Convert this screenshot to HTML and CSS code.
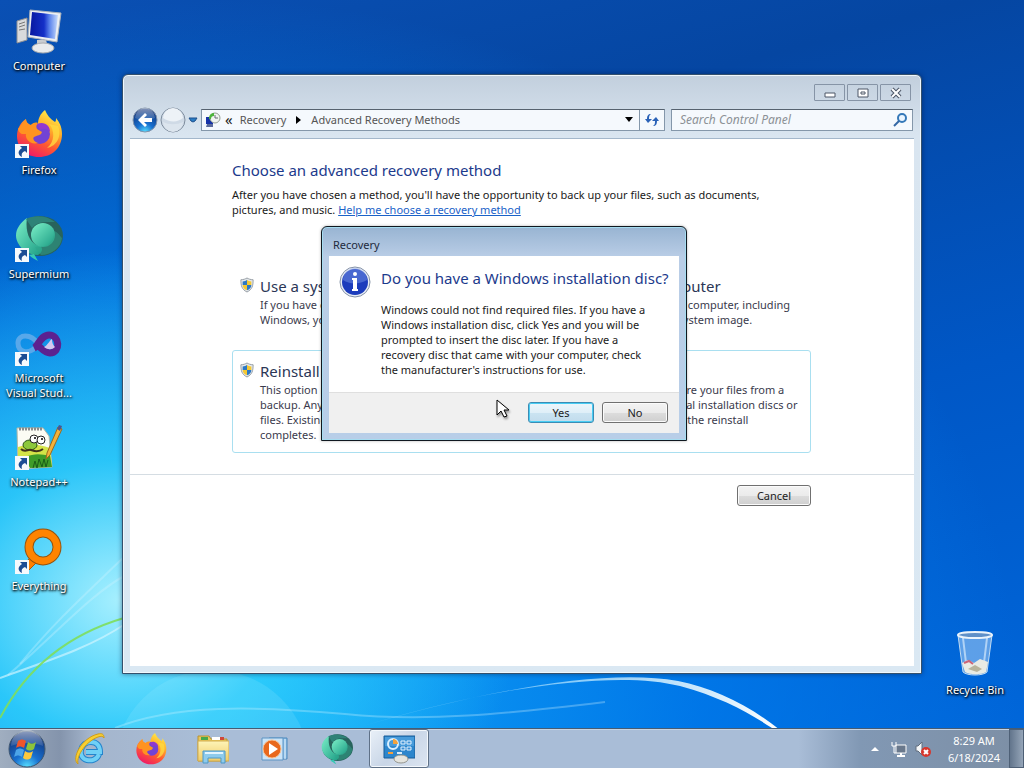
FILE: index.html
```
<!DOCTYPE html>
<html lang="en">
<head>
    <meta charset="UTF-8">
    <meta name="viewport" content="width=device-width, initial-scale=1.0">
    <title>Advanced Recovery Methods</title>
    <link rel="stylesheet" href="styles.css">
</head>
<body>
    <!-- shared icons -->
    <svg class="defs" aria-hidden="true">
        <defs>
            <linearGradient id="foxBody" x1="0.8" y1="0" x2="0.3" y2="1">
                <stop offset="0" stop-color="#fff44f"/>
                <stop offset="0.35" stop-color="#ffb02a"/>
                <stop offset="0.65" stop-color="#ff5a30"/>
                <stop offset="1" stop-color="#ee1868"/>
            </linearGradient>
            <linearGradient id="smBall" x1="0" y1="0" x2="1" y2="1">
                <stop offset="0" stop-color="#7cf0c8"/>
                <stop offset="1" stop-color="#1c9c84"/>
            </linearGradient>
            <linearGradient id="screen" x1="0" y1="0" x2="1" y2="0">
                <stop offset="0" stop-color="#0818a0"/>
                <stop offset="0.5" stop-color="#1430c8"/>
                <stop offset="0.7" stop-color="#5c84ec"/>
                <stop offset="1" stop-color="#c8dcfc"/>
            </linearGradient>
            <radialGradient id="blueBall" cx="0.5" cy="1" r="0.9">
                <stop offset="0" stop-color="#58e0ff"/>
                <stop offset="0.4" stop-color="#1870d0"/>
                <stop offset="1" stop-color="#12357c"/>
            </radialGradient>
            <linearGradient id="gloss" x1="0" y1="0" x2="0" y2="1">
                <stop offset="0" stop-color="#fff" stop-opacity="0.8"/>
                <stop offset="1" stop-color="#fff" stop-opacity="0.15"/>
            </linearGradient>
            <linearGradient id="folder" x1="0" y1="0" x2="0" y2="1">
                <stop offset="0" stop-color="#fdf4b8"/>
                <stop offset="1" stop-color="#f0cc68"/>
            </linearGradient>
        </defs>
        <symbol id="firefox" viewBox="0 0 48 48">
            <path d="M30 0c-5 4-7 9-7 14-3-1-5-1-7 1-3-1-5-3-5-6-6 4-9 10-9 17 0 12 9 21 22 21s23-9 23-23c0-8-3-12-6-16 0 2 0 3-1 4-5-3-8-7-10-12z" fill="url(#foxBody)"/>
            <circle cx="25" cy="24" r="10" fill="#7242d4"/>
            <path d="M22 14c7-3 13 1 13 8-3-4-7-4-10-2z" fill="#9038d0"/>
            <path d="M3 19c2-3 5-5 8-10 0 4 2 6 5 6 2-2 4-3 7-2-2 2-2 4-1 6l5 3c-1 4-5 3-8 5-2 2 1 5 4 6-8 2-13-4-12-9-3 0-6 1-8-5z" fill="#ff9320"/>
            <path d="M34 14c6 6 6 18-2 24 10-2 15-12 11-22z" fill="#ffda40" opacity="0.8"/>
        </symbol>
        <symbol id="supermium" viewBox="0 0 48 48">
            <ellipse cx="25" cy="22" rx="23" ry="20" fill="#28635c"/>
            <path d="M12 4C3 10-2 20 3 29c4 8 12 12 20 12 4-3 5-5 3-9C14 31 10 17 12 4z" fill="url(#smBall)"/>
            <path d="M11 5c8-4 20-4 29 3-10 0-17-1-23 6z" fill="#2e8277"/>
            <circle cx="28" cy="21" r="12" fill="url(#smBall)"/>
            <path d="M39 17c4 1 6 5 8 7-1 10-11 17-21 17l-6-8c10 2 20-4 19-16z" fill="#32a389" opacity="0.5"/>
            <path d="M14 41c3 3 6 4 9 6l-4-7z" fill="#36c9b4"/>
        </symbol>
        <symbol id="shield" viewBox="0 0 16 18">
            <path d="M8 1c2 1 4 2 7 2 0 7-1 11-7 14C2 14 1 10 1 3c3 0 5-1 7-2z" fill="#e4e8ec" stroke="#8b939b"/>
            <path d="M8 3v6H3V5c2 0 4-1 5-2z" fill="#2c78c4"/>
            <path d="M8 3v6h5V5c-2 0-4-1-5-2z" fill="#f5c832"/>
            <path d="M3 9h5v6C5 14 3 12 3 9z" fill="#f5c832"/>
            <path d="M13 9H8v6c3-1 5-3 5-6z" fill="#2c78c4"/>
        </symbol>
        <symbol id="shortcut" viewBox="0 0 14 14">
            <path d="M0 0h14v14H0z" fill="#f6f9fc"/>
            <path d="M5 2h7v7l-2-2c-3 1-4 3-3 6-4-2-5-6 0-9z" fill="#1c4d94"/>
        </symbol>
    </svg>

    <div class="desktop">
        <svg class="wallpaper" viewBox="0 0 1024 768" preserveAspectRatio="none" aria-hidden="true">
            <defs>
                <linearGradient id="streak" x1="0" y1="0" x2="1" y2="0">
                    <stop offset="0" stop-color="#bfeaff" stop-opacity="0.1"/>
                    <stop offset="0.5" stop-color="#bfeaff" stop-opacity="0.7"/>
                    <stop offset="1" stop-color="#fff"/>
                </linearGradient>
            </defs>
            <circle cx="212" cy="768" r="98" fill="#b4f4ff" opacity="0.15"/>
            <path d="M0 678c44-16 90-30 125-54" class="ray"/>
            <path d="M8 675C50 640 90 594 126 575" class="ray thin"/>
            <path d="M20 664C56 620 90 590 126 555" class="ray thin"/>
            <path d="M0 718c26-49 66-83 124-100" class="ray green"/>
            <path d="M115 728c60-24 140-22 230-14 80 8 160 0 260-12" class="ray thin"/>
            <path d="M350 730c120-38 260-62 330-44 40 11 66 25 92 42l8 2c-30-24-66-42-102-49-80-14-210 14-328 49z" fill="url(#streak)"/>
        </svg>

        <nav class="icons" aria-label="Desktop">
            <a class="icon" href="#computer">
                <svg viewBox="0 0 48 48">
                    <path d="M2 15l10-3v22L2 37z" fill="#d9dadc" stroke="#8e9094"/>
                    <path d="M4 18l6-2M4 21l6-2M4 24l6-1" stroke="#777"/>
                    <path d="M22 34h9l2 7H22z" fill="#c9ccd0"/>
                    <ellipse cx="28" cy="42" rx="11" ry="5" fill="#e9ebed" stroke="#a9abae"/>
                    <path d="M15 4l31 3-4 29-29-5z" fill="#eceff2" stroke="#a9b1bc"/>
                    <path d="M17 6l26 3-3 24-25-4z" fill="url(#screen)"/>
                </svg>
                <span>Computer</span>
            </a>
            <a class="icon" href="#firefox-app">
                <svg viewBox="0 0 48 48"><use href="#firefox"/><use href="#shortcut" x="0" y="34" width="14" height="14"/></svg>
                <span>Firefox</span>
            </a>
            <a class="icon" href="#supermium-app">
                <svg viewBox="0 0 48 48"><use href="#supermium"/><use href="#shortcut" x="0" y="34" width="14" height="14"/></svg>
                <span>Supermium</span>
            </a>
            <a class="icon" href="#visual-studio">
                <svg viewBox="0 0 48 48">
                    <path d="M23 26C16 15 3 16 3 25s10 12 18 4" fill="none" stroke="#58a8ea" stroke-width="5"/>
                    <path d="M19 30c4-2 7-13 15-13 11 0 12 18 1 18-6 0-9-6-13-8" fill="none" stroke="#5c2290" stroke-width="7"/>
                    <path d="M29 29c4-2 5-6 8-8 0 4 1 6 3 8-3 3-7 3-11 0z" fill="#d6c6ef"/>
                    <use href="#shortcut" x="0" y="34" width="14" height="14"/>
                </svg>
                <span>Microsoft<br>Visual Stud...</span>
            </a>
            <a class="icon" href="#notepad">
                <svg viewBox="0 0 48 48">
                    <path d="M2 6h26l6 8 3 31-34 2z" fill="#fbfcf4" stroke="#b4b8a8"/>
                    <path d="M3 25c12-4 20-3 32 1l2 18-34 2z" fill="#d4e448"/>
                    <path d="M10 35c10-4 16-3 25-1l2 11-22 1z" fill="#3f9c28"/>
                    <path d="M18 46l2-7 2 7 2-9 3 8 2-8 2 8 2-7" fill="none" stroke="#1b5c18"/>
                    <path d="M4 7h24" stroke="#8c8c8c" stroke-width="3" stroke-dasharray="2 1"/>
                    <ellipse cx="15" cy="23" rx="7" ry="5" fill="#8cc83c" stroke="#2a5418"/>
                    <path d="M6 27c4 4 7 0 10 1s7 3 12-1" fill="none" stroke="#41321c" stroke-width="2"/>
                    <circle cx="19" cy="17" r="4" fill="#fff" stroke="#222"/>
                    <circle cx="26" cy="18" r="4" fill="#fff" stroke="#222"/>
                    <circle cx="20" cy="16" r="1"/><circle cx="27" cy="17" r="1"/>
                    <path d="M31 37l1-6L43 5l4 2-12 26z" fill="#f3b23a" stroke="#9a6a1c"/>
                    <path d="M42 7l2-4 3 1-2 5z" fill="#4a5590"/>
                    <use href="#shortcut" x="0" y="34" width="14" height="14"/>
                </svg>
                <span>Notepad++</span>
            </a>
            <a class="icon" href="#everything">
                <svg viewBox="0 0 48 48">
                    <path d="M17 29l6 6-9 9-5-5z" fill="#ff8000" stroke="#a85808"/>
                    <circle cx="28" cy="21" r="14" fill="none" stroke="#945410" stroke-width="9"/>
                    <circle cx="28" cy="21" r="14" fill="none" stroke="#ff8400" stroke-width="7"/>
                    <use href="#shortcut" x="0" y="34" width="14" height="14"/>
                </svg>
                <span>Everything</span>
            </a>
        </nav>

        <a class="icon recycle" href="#recycle-bin">
            <svg viewBox="0 0 48 48">
                <path d="M7 5h34l-5 37c-4 4-20 4-24 0z" fill="#a9d0f5" fill-opacity="0.55" stroke="#c3dcf2"/>
                <path d="M12 8l4 33M36 8l-4 33" stroke="#e8f5ff" stroke-width="2" opacity="0.6"/>
                <path d="M11 33l6-3 6 3 6-4 8 3-2 10c-5 3-16 3-21 0z" fill="#e9ebe4"/>
                <path d="M13 33l5-2 4 3" fill="none" stroke="#cc6478" stroke-width="2"/>
                <path d="M17 39l7-4 7 4-5 3" fill="#b8b49c"/>
                <ellipse cx="24" cy="5" rx="17" ry="3" fill="#5f90c8" stroke="#eaf3fb" stroke-width="2"/>
            </svg>
            <span>Recycle Bin</span>
        </a>

        <main class="window">
            <header class="titlebar">
                <button class="caption" aria-label="Minimize"><svg viewBox="0 0 14 12"><path d="M2 6h10v4H2z" fill="#fff" stroke="#4c5666"/></svg></button>
                <button class="caption" aria-label="Maximize"><svg viewBox="0 0 14 12"><path d="M2 2h10v8H2z" fill="#fff" stroke="#4c5666"/><path d="M5 5h4v2H5z" fill="#fff" stroke="#4c5666"/></svg></button>
                <button class="caption" aria-label="Close"><svg viewBox="0 0 14 12"><path d="M3 2l8 8M11 2l-8 8" stroke="#4c5666" stroke-width="4"/><path d="M3 2l8 8M11 2l-8 8" stroke="#fff" stroke-width="2"/></svg></button>
            </header>

            <div class="toolbar">
                <button class="nav-btn" aria-label="Back">
                    <svg viewBox="0 0 26 26">
                        <circle cx="13" cy="13" r="12" fill="url(#blueBall)" stroke="#8294ac"/>
                        <path d="M3 11a10 10 0 0 1 20 0c-6 3-14 3-20 0z" fill="url(#gloss)" opacity="0.6"/>
                        <path d="M6 13l7-7 2 2-3 3h8v4h-8l3 3-2 2z" fill="#fff"/>
                    </svg>
                </button>
                <button class="nav-btn" aria-label="Forward">
                    <svg viewBox="0 0 26 26">
                        <circle cx="13" cy="13" r="12" fill="#cfdae6" stroke="#7f8d9e"/>
                        <path d="M3 11a10 10 0 0 1 20 0c-6 5-14 4-20 0z" fill="#edf2f7"/>
                        <path d="M3 15c6 3 14 3 20 0a10 10 0 0 1-20 0z" fill="#dce5ee"/>
                    </svg>
                </button>
                <button class="recent" aria-label="Recent pages"><svg viewBox="0 0 10 6"><path d="M1 1h8L7 4 5 5 3 4z" fill="#2a7cc4" stroke="#1d4f8c"/></svg></button>
                <div class="address">
                    <svg class="address-icon" viewBox="0 0 16 16">
                        <path d="M1 5h7v7H1z" fill="#1733a8"/><path d="M2 12h6v3H1z" fill="#5a6a9c"/>
                        <circle cx="10" cy="6" r="5" fill="#f0f4f0" stroke="#96a096"/>
                        <path d="M10 3v3h3" fill="none" stroke="#667"/>
                        <path d="M4 7c0-4 2-6 5-6v3c-2 0-3 1-3 3z" fill="#4cb43c"/>
                    </svg>
                    <span class="chevrons">«</span>
                    <a href="#recovery">Recovery</a>
                    <svg class="crumb-arrow" viewBox="0 0 5 8"><path d="M0 0l5 4-5 4z" fill="#000"/></svg>
                    <a href="#methods">Advanced Recovery Methods</a>
                    <button class="drop" aria-label="Previous locations"><svg viewBox="0 0 8 5"><path d="M0 0h8L4 5z" fill="#000"/></svg></button>
                    <button class="refresh" aria-label="Refresh">
                        <svg viewBox="0 0 16 16"><path d="M7 2c-3 0-4 2-4 5H1l3 4 4-4H5c0-2 0-4 2-5z" fill="#2a62b8"/><path d="M9 14c3 0 4-2 4-5h2l-3-4-4 4h3c0 2 0 4-2 5z" fill="#2a62b8"/></svg>
                    </button>
                </div>
                <div class="search">
                    <input type="text" placeholder="Search Control Panel" aria-label="Search Control Panel">
                    <svg viewBox="0 0 14 14"><circle cx="9" cy="5" r="4" fill="#eaf5ff" stroke="#3478b8" stroke-width="2"/><path d="M6 8l-5 5" stroke="#3468a4" stroke-width="2"/></svg>
                </div>
            </div>

            <div class="content">
                <section class="page">
                    <h1>Choose an advanced recovery method</h1>
                    <p class="intro">After you have chosen a method, you'll have the opportunity to back up your files, such as documents,<br>pictures, and music. <a href="#help">Help me choose a recovery method</a></p>

                    <button class="option">
                        <svg class="shield"><use href="#shield"/></svg>
                        <span class="option-text">
                            <span class="option-title">Use a system image you created earlier to recover your computer</span>
                            <span>If you have created the system image, you can use it to replace everything on your computer, including<br>Windows, your programs, and all of your files, with the information saved on the system image.</span>
                        </span>
                    </button>
                    <button class="option selected">
                        <svg class="shield"><use href="#shield"/></svg>
                        <span class="option-text">
                            <span class="option-title">Reinstall Windows (requires disc)</span>
                            <span>This option reinstalls Windows on your computer. Afterwards, you can always restore your files from a<br>backup. Any programs you installed will need to be reinstalled by using your original installation discs or<br>files. Existing files might be moved to a Windows.old folder on your hard disk after the reinstall<br>completes.</span>
                        </span>
                    </button>
                </section>
                <footer class="page-footer">
                    <button class="btn">Cancel</button>
                </footer>
            </div>
        </main>

        <div class="dialog" role="dialog" aria-labelledby="dialog-title">
            <div class="dialog-caption">Recovery</div>
            <div class="dialog-body">
                <svg class="info" viewBox="0 0 32 32">
                    <circle cx="16" cy="16" r="15" fill="#e8edf5" stroke="#8592a8"/>
                    <circle cx="16" cy="16" r="13" fill="#1c3cbc"/>
                    <path d="M4 14a12 12 0 0 1 24 0c-7 4-17 5-24 0z" fill="#7f9ce8" opacity="0.45"/>
                    <circle cx="16" cy="8" r="2" fill="#fff"/>
                    <path d="M13 12h5v11h1v2h-6v-2h1v-9h-1z" fill="#fff"/>
                </svg>
                <div>
                    <h2 id="dialog-title">Do you have a Windows installation disc?</h2>
                    <p>Windows could not find required files. If you have a<br>Windows installation disc, click Yes and you will be<br>prompted to insert the disc later. If you have a<br>recovery disc that came with your computer, check<br>the manufacturer's instructions for use.</p>
                </div>
            </div>
            <div class="dialog-footer">
                <button class="btn default">Yes</button>
                <button class="btn">No</button>
            </div>
        </div>

        <svg class="cursor" viewBox="0 0 14 20" aria-hidden="true"><path d="M1 1v15l4-4 3 6 3-1-3-6h5z" fill="#fff" stroke="#000"/></svg>
    </div>

    <footer class="taskbar">
        <button class="start" aria-label="Start">
            <svg viewBox="0 0 38 38">
                <circle cx="19" cy="19" r="18" fill="url(#blueBall)" stroke="#3f566e"/>
                <path d="M3 16a16 16 0 0 1 32 0c-9-4-22-4-32 0z" fill="url(#gloss)" opacity="0.7"/>
                <path d="M10 11c3-2 5-2 8 0l-2 7c-3-2-5-2-8 0z" fill="#f0552a"/>
                <path d="M20 12c3 2 5 2 8 0l-2 7c-3 2-5 2-8 0z" fill="#8cc43c"/>
                <path d="M8 20c3-2 5-2 8 0l-2 7c-3-2-5-2-8 0z" fill="#4ca4e8"/>
                <path d="M17 21c3 2 5 2 8 0l-2 7c-3 2-5 2-8 0z" fill="#fcc83c"/>
            </svg>
        </button>
        <button class="task" aria-label="Internet Explorer">
            <svg viewBox="0 0 32 32">
                <path d="M26 21c-2 6-8 7-12 6-5-1-7-6-6-10 1-5 5-8 10-8 6 0 9 4 9 10H13" fill="none" stroke="#2484cc" stroke-width="6"/>
                <path d="M26 21c-2 6-8 7-12 6-5-1-7-6-6-10 1-5 5-8 10-8 6 0 9 4 9 10H13" fill="none" stroke="#6fd0f6" stroke-width="4"/>
                <path d="M5 31C-2 26 8 5 25 1c4-1 6 0 6 4-1-2-3-2-6-1C14 8 3 22 5 31z" fill="#f8cf30" stroke="#cf9c1a"/>
            </svg>
        </button>
        <button class="task" aria-label="Firefox"><svg><use href="#firefox"/></svg></button>
        <button class="task" aria-label="Windows Explorer">
            <svg viewBox="0 0 32 32">
                <path d="M1 3h11l2 3h16v22H1z" fill="#e9c75a" stroke="#b89232"/>
                <path d="M4 4h7v3H4z" fill="#47a84b"/><path d="M15 4h12v3H15z" fill="#fff"/><path d="M23 4h4v3h-4z" fill="#d0483a"/>
                <path d="M1 8h31v20H1z" fill="url(#folder)" stroke="#d2ae50"/>
                <path d="M6 30V18h22v12h-4v-5H11v5z" fill="#8ecbec" stroke="#4d98c8"/>
                <path d="M8 20h18" stroke="#e2f5ff" stroke-width="2"/>
            </svg>
        </button>
        <button class="task" aria-label="Windows Media Player">
            <svg viewBox="0 0 32 32">
                <path d="M10 5h18v21H10z" fill="#8fc0e8" stroke="#4c88bc"/>
                <path d="M3 5h21v22H3z" fill="#cbe4f7" stroke="#5c94c4"/>
                <path d="M26 6v20" stroke="#e4f2fc"/>
                <circle cx="13" cy="16" r="9" fill="#e8681c" stroke="#f9c090"/>
                <path d="M10 10l9 6-9 6z" fill="#fff"/>
            </svg>
        </button>
        <button class="task" aria-label="Supermium"><svg><use href="#supermium"/></svg></button>
        <button class="task active" aria-label="Control Panel">
            <svg viewBox="0 0 32 32">
                <path d="M1 3h31v22H1z" fill="#2d86cc" stroke="#185c98"/>
                <path d="M2 4h29v9H2z" fill="#58aae2" opacity="0.6"/>
                <circle cx="10" cy="11" r="5" fill="none" stroke="#d9efff" stroke-width="2"/>
                <path d="M10 6a5 5 0 0 1 5 5h-5z" fill="#f2a23c"/>
                <path d="M18 8h4v3h-4zM24 8h4v3h-4zM18 14h4v3h-4zM24 14h4v3h-4z" fill="#3c90d4" stroke="#e2f2ff"/>
                <path d="M5 20h5" stroke="#f5a03c" stroke-width="2"/>
                <path d="M14 20h5" stroke="#d8ecfb" stroke-width="2"/>
                <ellipse cx="18" cy="26" rx="7" ry="4" fill="#e5e5df" stroke="#95968f"/>
            </svg>
        </button>

        <div class="tray">
            <button class="tray-btn" aria-label="Show hidden icons"><svg class="up" viewBox="0 0 8 4"><path d="M0 4l4-4 4 4z" fill="#fff"/></svg></button>
            <svg class="tray-icon" viewBox="0 0 16 16">
                <path d="M5 4h10v8H5z" fill="#69788c" stroke="#fff"/>
                <path d="M10 12v3M6 15h8" stroke="#fff" stroke-width="2"/>
                <path d="M1 1v4h4V1M3 5v7h2" fill="none" stroke="#fff"/>
            </svg>
            <svg class="tray-icon" viewBox="0 0 16 16">
                <path d="M1 5h2l4-4v13l-4-4H1z" fill="#f4f6f8" stroke="#616d7c"/>
                <circle cx="11" cy="11" r="5" fill="#d8362c"/>
                <path d="M9 9l4 4M13 9l-4 4" stroke="#fff" stroke-width="2"/>
            </svg>
            <div class="clock"><span>8:29 AM</span><span>6/18/2024</span></div>
            <button class="show-desktop" aria-label="Show desktop"></button>
        </div>
    </footer>
</body>
</html>
```
FILE: styles.css
```
* {
    box-sizing: border-box;
}

body {
    margin: 0;
    height: 100vh;
    display: flex;
    flex-direction: column;
    overflow: hidden;
    font-family: "Noto Sans", "Open Sans", sans-serif;
    font-size: 11px;
    line-height: 15px;
    color: #1a1a1a;
    background:
        radial-gradient(ellipse 400px 350px at 120px 600px, rgba(175, 244, 255, 0.95), rgba(50, 212, 252, 0.8) 40%, rgba(20, 165, 245, 0) 100%),
        radial-gradient(ellipse 800px 700px at 220px 700px, #12aafa, rgba(0, 125, 238, 0.75) 60%, rgba(0, 100, 220, 0) 100%),
        linear-gradient(165deg, #0a50b4, #0546a2 25%, #0057c6 60%, #0068dc);
}

a {
    color: inherit;
    text-decoration: none;
}

button {
    padding: 0;
    border: none;
    background: none;
    font: inherit;
    color: inherit;
}

svg {
    display: block;
    flex: none;
}

.defs {
    position: absolute;
    width: 0;
    height: 0;
}

.desktop {
    position: relative;
    flex: 1;
}

.wallpaper {
    position: absolute;
    top: 0;
    left: 0;
    width: 100vw;
    height: 100vh;
}

.ray {
    fill: none;
    stroke: #d6f6ff;
    stroke-width: 2;
    opacity: 0.65;
}

.ray.thin {
    opacity: 0.3;
}

.ray.green {
    stroke: #7ede5c;
    opacity: 0.9;
}

/* desktop icons */
.icons {
    position: absolute;
    top: 6px;
    left: 0;
}

.icon {
    display: flex;
    flex-direction: column;
    align-items: center;
    width: 78px;
    height: 104px;
    text-align: center;
    color: #fff;
    text-shadow: 1px 1px 2px #000, 0 1px 3px #000;
}

.icon svg {
    width: 48px;
    height: 48px;
    margin-bottom: 4px;
}

.icon.recycle {
    position: absolute;
    right: 10px;
    bottom: 0;
    height: 98px;
}

/* main window */
.window {
    position: absolute;
    top: 74px;
    left: 122px;
    right: 102px;
    bottom: 54px;
    display: flex;
    flex-direction: column;
    padding: 0 7px 7px;
    border: 1px solid #34506c;
    border-radius: 6px 6px 0 0;
    background: linear-gradient(#c2cfdd, #d9e5f0 60px, #dae8f3);
    box-shadow: inset 0 0 0 1px #f0f7fc, 0 0 5px rgba(0, 20, 60, 0.5);
}

.titlebar {
    display: flex;
    justify-content: flex-end;
    gap: 2px;
    padding: 9px 3px 0;
}

.caption {
    display: flex;
    align-items: center;
    justify-content: center;
    width: 31px;
    height: 17px;
    border: 1px solid #8694a6;
    border-radius: 1px;
}

.caption svg {
    width: 14px;
    height: 12px;
}

.toolbar {
    display: flex;
    align-items: center;
    height: 37px;
    padding: 0 1px 0 2px;
}

.nav-btn {
    margin-right: 2px;
}

.nav-btn svg {
    width: 26px;
    height: 26px;
}

.recent {
    padding: 0 3px 0 0;
}

.recent svg {
    width: 10px;
    height: 6px;
}

.address {
    display: flex;
    align-items: center;
    flex: 1;
    height: 22px;
    padding-left: 3px;
    border: 1px solid #8497aa;
    border-top-color: #56626f;
    background: #f5f9fd;
    color: #555;
}

.address-icon {
    width: 16px;
    height: 16px;
}

.chevrons {
    margin: 0 7px 0 4px;
    font-size: 15px;
    color: #222;
}

.crumb-arrow {
    width: 5px;
    height: 8px;
    margin: 0 10px;
}

.drop {
    margin-left: auto;
    padding: 8px 6px;
}

.drop svg {
    width: 8px;
    height: 5px;
}

.refresh {
    height: 100%;
    padding: 0 4px;
    border-left: 1px solid #8497aa;
}

.refresh svg {
    width: 16px;
    height: 16px;
}

.search {
    display: flex;
    align-items: center;
    width: 242px;
    height: 22px;
    margin-left: 6px;
    padding: 0 5px 0 8px;
    border: 1px solid #8497aa;
    border-top-color: #56626f;
    background: #f5f9fd;
}

.search input {
    flex: 1;
    min-width: 0;
    padding: 0;
    border: none;
    outline: none;
    background: none;
    font: inherit;
    font-size: 12px;
    font-style: italic;
}

.search input::placeholder {
    color: #8c9196;
}

.search svg {
    width: 14px;
    height: 14px;
}

.content {
    flex: 1;
    border-top: 1px solid #a3b7cb;
    background: #fff;
}

.page {
    padding: 21px 102px;
}

h1,
h2 {
    margin: 0;
    font-size: 15px;
    font-weight: 400;
    line-height: 20px;
    color: #1c3a8c;
}

.intro {
    margin: 7px 0 53px;
}

.intro a {
    color: #1a62c8;
    text-decoration: underline;
}

.option {
    display: flex;
    gap: 6px;
    width: 100%;
    max-width: 579px;
    padding: 4px 7px 10px;
    border: 1px solid transparent;
    border-radius: 3px;
    text-align: left;
    white-space: nowrap;
    color: #3a3a4c;
}

.option.selected {
    margin-top: 12px;
    padding-top: 9px;
    border-color: #a9dff0;
}

.shield {
    width: 14px;
    height: 16px;
    margin-top: 2px;
}

.option-text {
    display: flex;
    flex-direction: column;
}

.option-title {
    font-size: 15px;
    line-height: 22px;
    color: #2b3656;
}

.page-footer {
    display: flex;
    justify-content: flex-end;
    padding: 10px 103px;
    border-top: 1px solid #d5dde3;
}

.btn {
    width: 66px;
    height: 21px;
    border: 1px solid #707070;
    border-radius: 3px;
    background: linear-gradient(#f3f3f3, #ebebeb 50%, #dddddd 50%, #cfcfcf);
    box-shadow: inset 0 0 0 1px #fbfbfb;
    color: #222;
}

.page-footer .btn {
    width: 74px;
}

.btn.default {
    border-color: #3c8cb4;
    background: linear-gradient(#eef6fb, #dfeff8 50%, #cbe4f2 50%, #c2dcec);
    box-shadow: inset 0 0 0 1px #48cdf4;
}

/* dialog */
.dialog {
    position: absolute;
    top: 226px;
    left: 321px;
    width: 366px;
    padding: 0 7px 7px;
    border: 1px solid #101820;
    border-radius: 6px 6px 0 0;
    background: linear-gradient(#98b4d2, #b9cde6 30px, #b8cee8);
    box-shadow: inset 0 0 0 1px #a5dcf0, 0 0 3px rgba(0, 0, 0, 0.3);
}

.dialog-caption {
    height: 29px;
    padding: 10px 4px 0;
    color: #1e2a3c;
}

.dialog-body {
    display: flex;
    gap: 10px;
    height: 136px;
    padding: 10px;
    background: #fff;
}

.dialog-body h2 {
    margin-top: 2px;
    white-space: nowrap;
}

.dialog-body p {
    margin: 14px 0 0;
}

.info {
    width: 32px;
    height: 32px;
}

.dialog-footer {
    display: flex;
    justify-content: flex-end;
    gap: 8px;
    padding: 9px 11px 10px;
    border-top: 1px solid #dfdfdf;
    background: #f0f0f0;
}

.cursor {
    position: absolute;
    top: 399px;
    left: 496px;
    width: 14px;
    height: 20px;
    filter: drop-shadow(1px 2px 1px rgba(0, 0, 0, 0.4));
}

/* taskbar */
.taskbar {
    position: relative;
    display: flex;
    height: 40px;
    border-top: 1px solid #465c74;
    background: linear-gradient(90deg, #a0aec0, #8494ac 60px, #a4b5cc 90px, #a9bdd7 200px, #a9bdd7 78%, #8198b4 84%, #7d8fa5);
    box-shadow: inset 0 1px 0 #c6d4e4;
}

.start {
    padding: 0 13px 0 8px;
}

.start svg {
    width: 38px;
    height: 38px;
}

.task {
    display: flex;
    align-items: center;
    justify-content: center;
    width: 60px;
    margin-right: 2px;
}

.task svg {
    width: 32px;
    height: 32px;
}

.task.active {
    border: 1px solid #5f7187;
    border-radius: 3px;
    background: linear-gradient(135deg, #e9f0f8, #c9d6e7 50%, #dce5f1);
    box-shadow: inset 0 0 0 1px #f4f8fc;
}

.tray {
    display: flex;
    align-items: center;
    margin-left: auto;
    color: #fff;
}

.tray-btn {
    margin-right: 8px;
    padding: 4px;
}

.up {
    width: 8px;
    height: 4px;
}

.tray-icon {
    width: 16px;
    height: 16px;
    margin-right: 8px;
}

.clock {
    display: flex;
    flex-direction: column;
    width: 70px;
    text-align: center;
    line-height: 17px;
}

.show-desktop {
    width: 15px;
    height: 39px;
    border: 1px solid #4e6076;
    background: linear-gradient(90deg, #62758c, #95a5b8);
}
```
